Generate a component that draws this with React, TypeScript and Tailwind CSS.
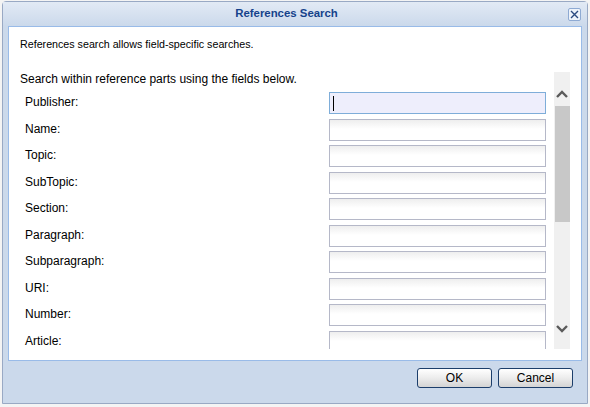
import React from "react";

const fields = [
  "Publisher",
  "Name",
  "Topic",
  "SubTopic",
  "Section",
  "Paragraph",
  "Subparagraph",
  "URI",
  "Number",
  "Article",
];

function Chevron({ up }: { up?: boolean }) {
  return (
    <svg width="12" height="8" viewBox="0 0 12 8" className="block">
      <path
        d={up ? "M1 7 L6 2 L11 7" : "M1 1 L6 6 L11 1"}
        fill="none"
        stroke="#5a5a5a"
        strokeWidth="2.4"
      />
    </svg>
  );
}

export default function App() {
  return (
    <div
      className="h-[407px] w-[590px] bg-[#f4f4f4] pl-[2px] pt-[1px]"
      style={{ fontFamily: '"Liberation Sans", Arial, sans-serif' }}
    >
      <div className="flex h-[403px] w-[586px] flex-col rounded-t-[4px] border border-[#99a9c4] bg-[#cbd9eb]">
        {/* title bar */}
        <div className="relative flex h-[24px] shrink-0 items-center justify-center bg-gradient-to-b from-[#e2eaf5] to-[#cbd9eb] pr-[17px]">
          <span className="text-[11.4px] font-bold text-[#15428b]">References Search</span>
          <button
            type="button"
            className="absolute right-[6px] top-[6px] flex h-[13px] w-[13px] items-center justify-center rounded-[2px] border border-[#8eaad3] bg-[#eef3fa]"
          >
            <svg width="9" height="9" viewBox="0 0 9 9">
              <path d="M1 1 L8 8 M8 1 L1 8" stroke="#2b4a80" strokeWidth="1.4" />
            </svg>
          </button>
        </div>

        {/* body */}
        <div className="mx-[5px] flex h-[335px] shrink-0 flex-col border border-[#99bbe8] bg-white px-[11px] pb-[11px] pt-[10px] text-[12px] text-black">
          <p className="text-[10.7px] leading-[15px]">References search allows field-specific searches.</p>
          <div className="mt-[20px] flex min-h-0 flex-1">
            <div className="min-w-0 flex-1 overflow-hidden">
              <p className="leading-[15px]">Search within reference parts using the fields below.</p>
              <div className="mt-[5px] grid auto-rows-[26.5px]">
                {fields.map((f, i) => (
                  <div key={f} className="flex items-start">
                    <span className="mt-[3px] w-[309px] pl-[5px] leading-[15px]">{f}:</span>
                    <div
                      className={
                        i === 0
                          ? "flex h-[22px] w-[217px] items-center border border-[#7eadd9] bg-[#eeeefc] pl-[3px]"
                          : "h-[22px] w-[217px] border border-[#b5b8c8] bg-gradient-to-b from-[#eeeeee] to-white to-[45%]"
                      }
                    >
                      {i === 0 && <span className="block h-[15px] w-[1px] bg-black" />}
                    </div>
                  </div>
                ))}
              </div>
            </div>
            {/* scrollbar */}
            <div className="ml-[7px] flex w-[16px] flex-col items-center bg-[#f0f0f0]">
              <div className="mt-[18px]">
                <Chevron up />
              </div>
              <div className="mt-[8px] h-[116px] w-[15px] bg-[#c8c8c8]" />
              <div className="flex-1" />
              <div className="mb-[16px]">
                <Chevron />
              </div>
            </div>
          </div>
        </div>

        {/* footer */}
        <div className="flex flex-1 items-start justify-end gap-[6px] pr-[14px] pt-[7px]">
          <button
            type="button"
            className="h-[20px] w-[75px] rounded-[3px] border border-[#1c3e6b] bg-gradient-to-b from-white via-[#ececec] to-[#d4d4d4] text-[12px] text-black"
          >
            OK
          </button>
          <button
            type="button"
            className="h-[20px] w-[75px] rounded-[3px] border border-[#1c3e6b] bg-gradient-to-b from-white via-[#ececec] to-[#d4d4d4] text-[12px] text-black"
          >
            Cancel
          </button>
        </div>
      </div>
    </div>
  );
}
